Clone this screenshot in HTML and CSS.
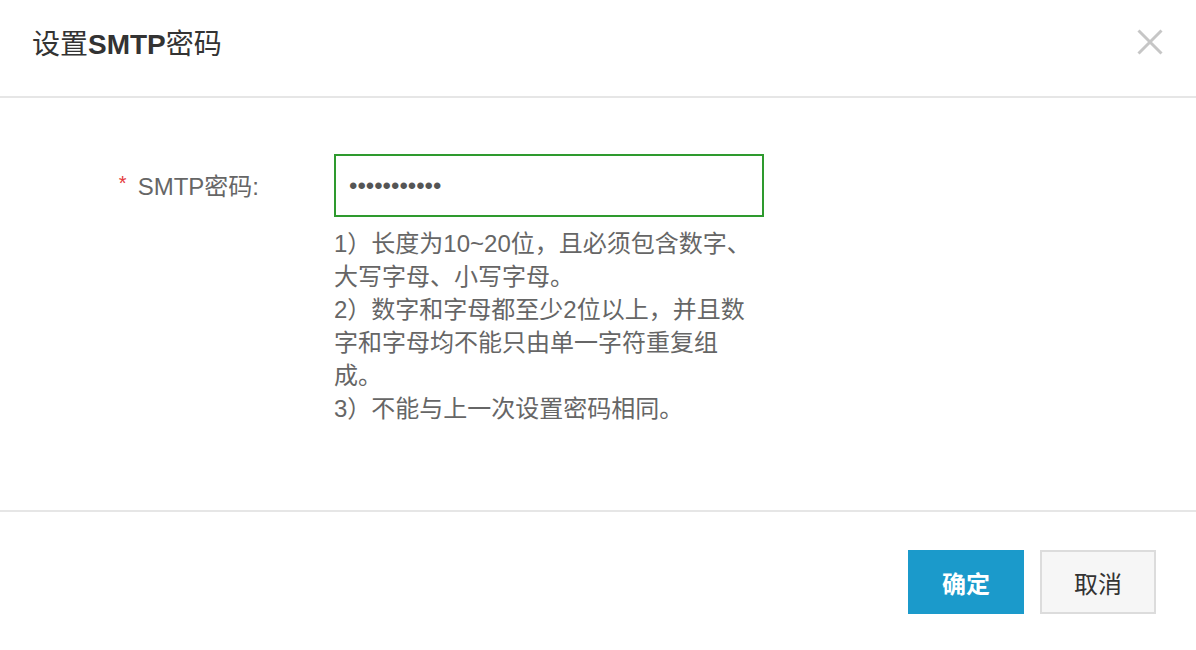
FILE: index.html
```html
<!DOCTYPE html>
<html lang="zh-CN">
<head>
<meta charset="utf-8">
<title>设置SMTP密码</title>
<link rel="stylesheet" href="styles.css">
</head>
<body>
<div class="dialog">
  <div class="header">
    <h1 class="title">设置<b>SMTP</b>密码</h1>
    <button class="close" aria-label="关闭">
      <svg width="26" height="26" viewBox="0 0 26 26"><path d="M1.5 1.5 L24.5 24.5 M24.5 1.5 L1.5 24.5" stroke="#c6c6c6" stroke-width="3" fill="none"/></svg>
    </button>
  </div>
  <div class="body">
    <div class="form-row">
      <label class="label"><span class="req">*</span>SMTP密码:</label>
      <div class="field">
        <input class="input" type="password" value="abcdefghijk">
        <div class="help">1）长度为10~20位，且必须包含数字、大写字母、小写字母。<br>2）数字和字母都至少2位以上，并且数字和字母均不能只由单一字符重复组成。<br>3）不能与上一次设置密码相同。</div>
      </div>
    </div>
  </div>
  <div class="footer">
    <button class="btn btn-primary">确定</button>
    <button class="btn btn-default">取消</button>
  </div>
</div>
</body>
</html>
```
FILE: styles.css
```css
html, body {
  margin: 0;
  padding: 0;
  background: #fff;
}
body {
  font-family: "Liberation Sans", "Noto Sans CJK SC", sans-serif;
  color: #666;
}
.dialog {
  width: 1196px;
  height: 650px;
  display: flex;
  flex-direction: column;
}
.header {
  height: 96px;
  border-bottom: 2px solid #e6e6e6;
  display: flex;
  align-items: flex-start;
  justify-content: space-between;
  padding: 0 33px 0 32px;
  box-sizing: content-box;
  flex: none;
}
.title {
  margin: 25px 0 0;
  font-size: 28px;
  line-height: 40px;
  font-weight: normal;
  color: #333;
}
.title b {
  font-weight: bold;
}
.close {
  margin: 29px 0 0;
  padding: 0;
  border: 0;
  background: none;
  width: 26px;
  height: 26px;
  cursor: pointer;
}
.close svg {
  display: block;
}
.body {
  height: 414px;
  box-sizing: border-box;
  padding-top: 56px;
  border-bottom: 2px solid #e6e6e6;
  flex: none;
}
.form-row {
  display: grid;
  grid-template-columns: 259px 430px;
  column-gap: 75px;
  align-items: start;
}
.label {
  height: 60px;
  display: flex;
  align-items: center;
  justify-content: flex-end;
  font-size: 24px;
  color: #666;
}
.req {
  color: #e4393c;
  margin-right: 11px;
  position: relative;
  top: -1px;
  font-size: 20px;
}
.field {
  display: flex;
  flex-direction: column;
}
.input {
  width: 430px;
  height: 63px;
  box-sizing: border-box;
  border: 2px solid #2e9a2e;
  padding: 0 13px;
  margin: 0;
  font-family: "Liberation Sans", sans-serif;
  font-size: 24px;
  color: #555;
  outline: none;
  background: #fff;
}
.help {
  margin-top: 10px;
  font-size: 24px;
  line-height: 33px;
  color: #666;
  width: 430px;
}
.footer {
  display: flex;
  justify-content: flex-end;
  gap: 16px;
  padding: 38px 40px 0 0;
}
.btn {
  width: 116px;
  height: 64px;
  box-sizing: border-box;
  font-family: "Liberation Sans", "Noto Sans CJK SC", sans-serif;
  font-size: 24px;
  display: flex;
  align-items: center;
  justify-content: center;
  padding: 0;
  cursor: pointer;
}
.btn-primary {
  background: #1b9acb;
  border: 0;
  color: #fff;
  font-weight: bold;
}
.btn-default {
  background: #f6f6f6;
  border: 2px solid #dcdcdc;
  color: #333;
}
```
